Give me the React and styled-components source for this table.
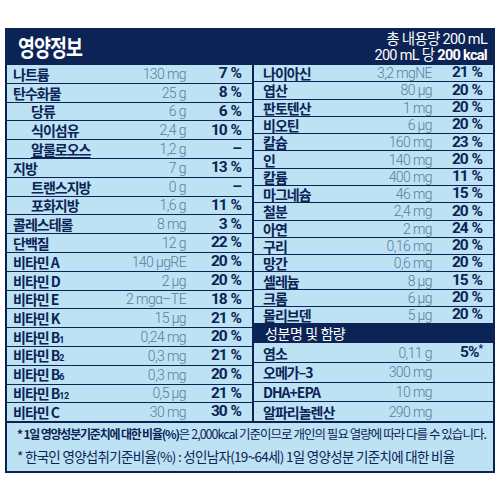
import React from "react";
import styled, { createGlobalStyle } from "styled-components";

const GlobalStyle = createGlobalStyle`
  body {
    margin: 0;
    background: #ffffff;
    font-family: "Noto Sans CJK KR", "Noto Sans", sans-serif;
  }
`;

const NAVY = "#0c2356";
const ROW_BG = "#bde2f3";
const VALUE = "#5a7c9c";

const leftRows = [
  { name: "나트륨", value: "130 mg", pct: "7" },
  { name: "탄수화물", value: "25 g", pct: "8" },
  { name: "당류", value: "6 g", pct: "6", sub: true },
  { name: "식이섬유", value: "2,4 g", pct: "10", sub: true },
  { name: "알룰로오스", value: "1,2 g", pct: "–", sub: true, underline: true },
  { name: "지방", value: "7 g", pct: "13" },
  { name: "트랜스지방", value: "0 g", pct: "–", sub: true },
  { name: "포화지방", value: "1,6 g", pct: "11", sub: true },
  { name: "콜레스테롤", value: "8 mg", pct: "3" },
  { name: "단백질", value: "12 g", pct: "22" },
  { name: "비타민 A", value: "140 µgRE", pct: "20" },
  { name: "비타민 D", value: "2 µg", pct: "20" },
  { name: "비타민 E", value: "2 mgα–TE", pct: "18" },
  { name: "비타민 K", value: "15 µg", pct: "21" },
  { name: "비타민 B", idx: "1", value: "0,24 mg", pct: "20" },
  { name: "비타민 B", idx: "2", value: "0,3 mg", pct: "21" },
  { name: "비타민 B", idx: "6", value: "0,3 mg", pct: "20" },
  { name: "비타민 B", idx: "12", value: "0,5 µg", pct: "21" },
  { name: "비타민 C", value: "30 mg", pct: "30" },
];

const rightRows = [
  { name: "나이아신", value: "3,2 mgNE", pct: "21" },
  { name: "엽산", value: "80 µg", pct: "20" },
  { name: "판토텐산", value: "1 mg", pct: "20" },
  { name: "비오틴", value: "6 µg", pct: "20" },
  { name: "칼슘", value: "160 mg", pct: "23" },
  { name: "인", value: "140 mg", pct: "20" },
  { name: "칼륨", value: "400 mg", pct: "11" },
  { name: "마그네슘", value: "46 mg", pct: "15" },
  { name: "철분", value: "2,4 mg", pct: "20" },
  { name: "아연", value: "2 mg", pct: "24" },
  { name: "구리", value: "0,16 mg", pct: "20" },
  { name: "망간", value: "0,6 mg", pct: "20" },
  { name: "셀레늄", value: "8 µg", pct: "15" },
  { name: "크롬", value: "6 µg", pct: "20" },
  { name: "몰리브덴", value: "5 µg", pct: "20" },
];

const extraRows = [
  { name: "염소", value: "0,11 g", star: true },
  { name: "오메가–3", value: "300 mg" },
  { name: "DHA+EPA", value: "10 mg" },
  { name: "알파리놀렌산", value: "290 mg" },
];

const Panel = styled.div`
  margin: 28px 5px 0;
  border: 2px solid ${NAVY};
  border-top: none;
  background: ${ROW_BG};
  color: ${NAVY};
`;

const Header = styled.div`
  height: 37px;
  background: ${NAVY};
  color: #fff;
  display: flex;
  align-items: center;
  justify-content: space-between;
  padding: 0 6px 0 11px;
`;

const Title = styled.h1`
  margin: 0;
  font-size: 23px;
  font-weight: 700;
  letter-spacing: -1.2px;
  line-height: 1;
  transform: scaleX(0.8);
  transform-origin: left center;
`;

const Amount = styled.div`
  text-align: right;
  font-family: "Roboto", "Noto Sans CJK KR", sans-serif;
  font-size: 14.5px;
  line-height: 16px;
  letter-spacing: -0.7px;
  font-weight: 400;
  margin-top: 2px;

  b {
    font-weight: 700;
  }
`;

const Body = styled.div`
  display: grid;
  grid-template-columns: 245px 1fr;
  height: 356px;
`;

const Column = styled.div`
  display: flex;
  flex-direction: column;
  border-left: ${(p) => (p.$divided ? `2px solid ${NAVY}` : "none")};
`;

const Row = styled.div`
  flex: ${(p) => (p.$fixed ? "0 0 18.7px" : "1 1 0")};
  display: grid;
  grid-template-columns: 1fr ${(p) => (p.$right ? "84px 50px" : "84px 55px")};
  align-items: center;
  padding: 0 11px 0 ${(p) => (p.$right ? "9px" : "6px")};
  border-top: ${(p) => (p.$open ? "none" : `1px solid ${NAVY}`)};
  min-height: 0;

  &:first-child {
    border-top: none;
  }
`;

const Name = styled.span`
  font-size: 14px;
  font-weight: 700;
  letter-spacing: -1px;
  line-height: 1;
  padding-left: ${(p) => (p.$sub ? "18px" : "0")};
  white-space: nowrap;
  text-decoration: ${(p) => (p.$underline ? "underline" : "none")};
  text-underline-offset: 2px;

  sub {
    font-family: "Roboto", sans-serif;
    font-size: 9px;
    vertical-align: baseline;
    letter-spacing: -0.5px;
  }
`;

const Value = styled.span`
  font-family: "Roboto", "Noto Sans CJK KR", sans-serif;
  font-weight: 300;
  font-size: 14px;
  letter-spacing: -0.6px;
  color: ${VALUE};
  text-align: right;
  white-space: nowrap;
  line-height: 1;
`;

const Pct = styled.span`
  font-family: "Roboto", sans-serif;
  font-weight: 700;
  font-size: 15.5px;
  letter-spacing: -1px;
  word-spacing: 1px;
  text-align: right;
  white-space: nowrap;
  line-height: 1;

  sup {
    font-size: 10px;
    vertical-align: 5px;
  }
`;

const SubHeader = styled.div`
  flex: 1 1 0;
  background: ${NAVY};
  color: #fff;
  font-size: 14px;
  letter-spacing: -0.4px;
  display: flex;
  align-items: center;
  padding-left: 11px;
`;

const Footer = styled.div`
  border-top: 2px solid ${NAVY};
  padding: 0 0 4px 10px;
  line-height: 22px;
  color: ${NAVY};
  white-space: nowrap;
`;

const FootLine = styled.div`
  font-size: ${(p) => (p.$large ? "13.5px" : "12.5px")};
  letter-spacing: ${(p) => (p.$large ? "-0.7px" : "-0.97px")};

  b {
    font-size: 12px;
    font-weight: 700;
    letter-spacing: -1.2px;
  }
`;

const pctText = (pct) => (pct === "–" ? "–" : `${pct} %`);

const renderName = (r) => (
  <Name $sub={r.sub} $underline={r.underline}>
    {r.name}
    {r.idx && <sub>{r.idx}</sub>}
  </Name>
);

export default function App() {
  return (
    <>
      <GlobalStyle />
      <Panel>
        <Header>
          <Title>영양정보</Title>
          <Amount>
            <div>총 내용량 200 mL</div>
            <div>
              200 mL 당 <b>200 kcal</b>
            </div>
          </Amount>
        </Header>
        <Body>
          <Column>
            {leftRows.map((r) => (
              <Row key={r.name + (r.idx || "")}>
                {renderName(r)}
                <Value>{r.value}</Value>
                <Pct>{pctText(r.pct)}</Pct>
              </Row>
            ))}
          </Column>
          <Column $divided>
            {rightRows.map((r) => (
              <Row key={r.name} $right>
                {renderName(r)}
                <Value>{r.value}</Value>
                <Pct>{pctText(r.pct)}</Pct>
              </Row>
            ))}
            <SubHeader>성분명 및 함량</SubHeader>
            {extraRows.map((r, i) => (
              <Row key={r.name} $right $fixed $open={i === 0}>
                {renderName(r)}
                <Value>{r.value}</Value>
                <Pct>
                  {r.star && (
                    <>
                      5%<sup>*</sup>
                    </>
                  )}
                </Pct>
              </Row>
            ))}
          </Column>
        </Body>
        <Footer>
          <FootLine>
            <b>* 1일 영양성분기준치에 대한 비율(%)</b>은 2,000kcal 기준이므로 개인의 필요 열량에 따라 다를 수 있습니다.
          </FootLine>
          <FootLine $large>* 한국인 영양섭취기준비율(%) : 성인남자(19~64세) 1일 영양성분 기준치에 대한 비율</FootLine>
        </Footer>
      </Panel>
    </>
  );
}
